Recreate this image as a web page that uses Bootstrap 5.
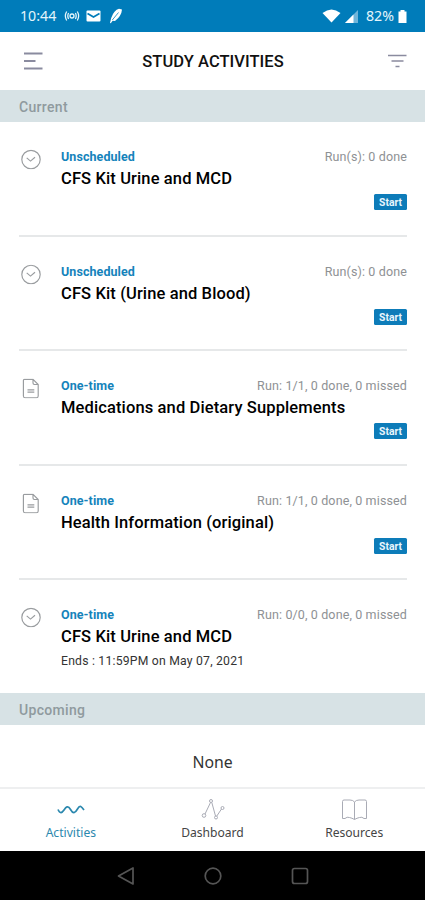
<!DOCTYPE html>
<html lang="en">
<head>
<meta charset="utf-8">
<meta name="viewport" content="width=device-width, initial-scale=1">
<title>Study Activities</title>
<link href="https://cdn.jsdelivr.net/npm/bootstrap@5.3.0/dist/css/bootstrap.min.css" rel="stylesheet">
<style>
body{font-family:Roboto,"Liberation Sans",sans-serif;width:425px;height:900px;overflow:hidden;background:#fff;color:#111}
svg{display:block;flex:none}
.statusbar{height:32px;background:#007cba;color:#e4f5fb;font:14.2px/32px "Noto Sans",sans-serif;padding:0 18px 0 20px}
.mail{margin-left:6px}
.titlebar{height:58px;padding:0 18px 0 24px}
.titlebar h1{font-size:16.5px;font-weight:500;letter-spacing:.05px;line-height:20px;padding:2px 5px 0 0}
.section-head{background:#d7e2e5;color:#8f9a9e;font-size:14px;font-weight:500;height:32px;line-height:35px;padding-left:19px;letter-spacing:.32px}
.activities{padding:0 18px 0 19px}
.activity{height:114.5px;padding:26px 0 0 2px;gap:20px;border-bottom:2px solid #e6e8e9}
.activity:last-child{border:0;height:113px}
.activity svg{fill:none;stroke:#999c9f;stroke-width:1.15}
.kind{color:#1583bb;font-size:12.5px;font-weight:700;line-height:17px;letter-spacing:.08px}
.runs{color:#8e9194;font-size:12.5px;line-height:17px;letter-spacing:.13px}
.name{font-size:16.5px;font-weight:500;line-height:20px;color:#000;margin-top:4px;letter-spacing:.12px}
.ends{font-size:12.2px;line-height:16px;color:#333;margin-top:6px;letter-spacing:.22px}
.start{background:#0d7cb9;color:#e9f6fc;font-size:10.3px;font-weight:700;line-height:17px;width:33px;height:16px;border-radius:1.5px;margin-top:5px;padding:0;border:0}
.none{height:62px;line-height:74px;font-size:15.8px;color:#333;font-family:"Noto Sans",sans-serif}
.tabs{height:64px;border-top:2px solid #eeeff0;font:12.1px/16px "Noto Sans",sans-serif;color:#444}
.tabs svg{margin:9px auto 4px;fill:none;stroke:#a9abb5}
.tabs .current{color:#2b88ae}
.tabs .current svg{stroke:currentColor;stroke-width:1.7}
.sysnav{height:49px;background:#000;gap:69px}
.sysnav svg{fill:none;stroke:#555;stroke-width:1.7;stroke-linejoin:round}
</style>
<script src="https://cdn.jsdelivr.net/npm/bootstrap@5.3.0/dist/js/bootstrap.bundle.min.js"></script>
</head>
<body>
<svg width="0" height="0" class="position-absolute">
<symbol id="clock" viewBox="0 0 20 20"><circle cx="10" cy="10" r="9.2"/><path d="M5.7 8.4L9.5 11.6L14 7.7"/></symbol>
<symbol id="doc" viewBox="0 0 20 20"><path d="M3.4.8H12L17.2 6V17.4Q17.2 19.2 15.4 19.2H4.2Q2.4 19.2 2.4 17.4V1.8Q2.4.8 3.4.8ZM12 .8V4.6Q12 6 13.4 6H17.2M6.5 11.4H13.3M6.5 13.6H13.3"/></symbol>
</svg>
<header>
<div class="statusbar d-flex align-items-center">
<span>10:44</span>
<svg class="ms-2" width="16" height="14" viewBox="0 0 16 14" fill="none" stroke="#e4f5fb" stroke-width="1.3"><circle cx="8" cy="7" r="2"/><path d="M4.6 4Q3 7 4.600 10M11.400 4Q13 7 11.400 10M2.700 2.500Q0 7 2.700 11.500M13.300 2.500Q16 7 13.300 11.500"/></svg>
<svg class="mail" width="15" height="12" viewBox="0 0 15 12"><rect x=".5" y=".5" width="14" height="11" rx="1" fill="#fff"/><path d="M1.500 3.500L7.500 7L13.500 3.500" fill="none" stroke="#007cba" stroke-width="1.700"/></svg>
<svg class="ms-2" width="14" height="16" viewBox="0 0 14 16"><path d="M1 15L2.200 10Q5 2 10 .8L13 1.500Q12.500 8 6 13L3.600 12.800L1.800 15.300Z" fill="#fff"/><path d="M3.300 12L9.500 4.500" stroke="#007cba" stroke-width=".8"/></svg>
<svg class="ms-auto" width="19" height="14" viewBox="0 0 19 14"><path d="M.5 4Q9.500-3 18.500 4L9.500 13.500Z" fill="#fff"/></svg>
<svg class="ms-1" width="13" height="13" viewBox="0 0 13 13"><path d="M0 13L13 0V13Z" fill="#70b5da"/><path d="M0 13L8.500 4.500V13Z" fill="#fff"/></svg>
<span class="ms-2">82%</span>
<svg class="ms-1" width="9" height="13" viewBox="0 0 9 13"><path d="M2.500 0H6.500V1.500H8.500V13H.5V1.500H2.500Z" fill="#fff"/></svg>
</div>
<div class="titlebar d-flex align-items-center justify-content-between">
<svg width="19" height="18" viewBox="0 0 19 18" stroke="#8a8b9f" stroke-width="1.800"><path d="M0 1.500H18.500M0 9H11.500M0 16.500H18.500"/></svg>
<h1 class="m-0">STUDY ACTIVITIES</h1>
<svg width="19" height="14" viewBox="0 0 19 14" stroke="#8a8b9f" stroke-width="1.700"><path d="M0 1.500H18.500M3.500 7H15.500M7.500 12.500H11.500"/></svg>
</div>
</header>
<main>
<div class="section-head">Current</div>
<div class="activities">
<div class="activity d-flex"><svg width="20" height="23"><use href="#clock" y="1.500" width="20" height="20"/></svg><div class="flex-grow-1"><div class="d-flex justify-content-between"><span class="kind">Unscheduled</span><span class="runs">Run(s): 0 done</span></div><div class="name">CFS Kit Urine and MCD</div><button class="start d-block ms-auto">Start</button></div></div>
<div class="activity d-flex"><svg width="20" height="23"><use href="#clock" y="1.500" width="20" height="20"/></svg><div class="flex-grow-1"><div class="d-flex justify-content-between"><span class="kind">Unscheduled</span><span class="runs">Run(s): 0 done</span></div><div class="name">CFS Kit (Urine and Blood)</div><button class="start d-block ms-auto">Start</button></div></div>
<div class="activity d-flex"><svg width="20" height="23"><use href="#doc" y="1.500" width="20" height="20"/></svg><div class="flex-grow-1"><div class="d-flex justify-content-between"><span class="kind">One-time</span><span class="runs">Run: 1/1, 0 done, 0 missed</span></div><div class="name">Medications and Dietary Supplements</div><button class="start d-block ms-auto">Start</button></div></div>
<div class="activity d-flex"><svg width="20" height="23"><use href="#doc" y="1.500" width="20" height="20"/></svg><div class="flex-grow-1"><div class="d-flex justify-content-between"><span class="kind">One-time</span><span class="runs">Run: 1/1, 0 done, 0 missed</span></div><div class="name">Health Information (original)</div><button class="start d-block ms-auto">Start</button></div></div>
<div class="activity d-flex"><svg width="20" height="23"><use href="#clock" y="1.500" width="20" height="20"/></svg><div class="flex-grow-1"><div class="d-flex justify-content-between"><span class="kind">One-time</span><span class="runs">Run: 0/0, 0 done, 0 missed</span></div><div class="name">CFS Kit Urine and MCD</div><div class="ends">Ends : 11:59PM on May 07, 2021</div></div></div>
</div>
<div class="section-head">Upcoming</div>
<div class="none text-center">None</div>
</main>
<nav class="tabs row g-0 text-center">
<div class="col current"><svg width="28" height="23" viewBox="0 0 28 23"><path d="M1 11.500C3 16 5 15 7 12S11 7 13.500 11.500S18 15.500 20.500 11S24.500 8.500 27 12"/></svg>Activities</div>
<div class="col"><svg width="28" height="23" viewBox="0 0 28 23"><circle cx="5" cy="17.500" r="1.800"/><path d="M6 16L11.500 4.500M12.800 4.500L16.500 18M17.800 18L22.500 11"/><circle cx="12" cy="3" r="1.500"/><circle cx="17" cy="19.500" r="1.500"/><circle cx="23.500" cy="10" r="1.500"/></svg>Dashboard</div>
<div class="col"><svg width="28" height="23" viewBox="0 0 28 23"><path d="M14.500 4Q13 2 10 2H4Q2.500 2 2.500 3.500V20.500H5Q7 18.500 9.500 19.500Q12 20 14.500 21.500Q17 20 19.500 19.500Q22 18.500 24 20.500H26.500V3.500Q26.500 2 25 2H19Q16 2 14.500 4V21.500"/></svg>Resources</div>
</nav>
<footer class="sysnav d-flex justify-content-center align-items-center">
<svg width="18" height="20" viewBox="0 0 18 20"><path d="M1.500 10L16 2V18Z"/></svg>
<svg width="18" height="18" viewBox="0 0 18 18"><circle cx="9" cy="9" r="7.800"/></svg>
<svg width="18" height="18" viewBox="0 0 18 18"><rect x="1.500" y="1.500" width="15" height="15" rx="2"/></svg>
</footer>
</body>
</html>
